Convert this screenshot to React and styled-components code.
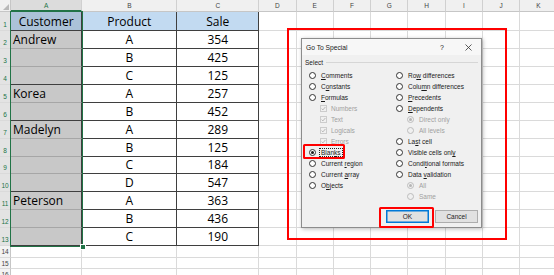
import React from 'react';
import styled, { createGlobalStyle } from 'styled-components';

const Global = createGlobalStyle`
  html, body { margin: 0; padding: 0; background: #fff; overflow: hidden; }
  body { width: 554px; height: 275px; }
`;

const GREEN = '#217346';
const GRID = '#dadada';
const DARK = '#3f3f3f';
const SOFT = '#a6a6a6';

const Page = styled.div`
  position: relative;
  width: 554px;
  height: 275px;
  overflow: hidden;
  background: #fff;
`;

const Sheet = styled.div`
  display: grid;
  grid-template-columns: 11px 71.3px 95px 82px repeat(8, 37.3px) 1fr;
  grid-template-rows: 12.3px 18.7px repeat(12, 17.94px) repeat(3, 11.6px);
  font-family: "Open Sans", sans-serif;
`;

const Placed = styled.div`
  grid-row: ${p => p.$row};
  grid-column: ${p => p.$col};
  box-sizing: border-box;
`;

const Corner = styled(Placed)`
  background: #f0f0f0;
  border-right: 1px solid #c6c6c6;
  border-bottom: 1px solid #c6c6c6;
  display: flex;
  align-items: flex-end;
  justify-content: flex-end;
  padding: 0 1px 1px 0;
`;

const ColHead = styled(Placed)`
  display: flex;
  align-items: center;
  justify-content: center;
  font-family: "Liberation Sans", Arial, sans-serif;
  font-size: 6.5px;
  color: ${p => (p.$sel ? GREEN : '#444')};
  background: ${p => (p.$sel ? '#dcdcdc' : '#f0f0f0')};
  border-right: 1px solid #d0d0d0;
  border-bottom: ${p => (p.$sel ? `2px solid ${GREEN}` : '1px solid #c6c6c6')};
`;

const RowHead = styled(Placed)`
  display: flex;
  align-items: ${p => (p.$short ? 'center' : 'flex-end')};
  justify-content: center;
  padding-bottom: ${p => (p.$short ? '0' : '2px')};
  font-family: "Liberation Sans", Arial, sans-serif;
  font-size: 6.5px;
  line-height: 7px;
  color: ${p => (p.$sel ? GREEN : '#444')};
  background: ${p => (p.$sel ? '#e3e3e3' : '#f3f3f3')};
  border-right: 1px solid #c6c6c6;
  border-bottom: 1px solid #dadada;
`;

const Cell = styled(Placed)`
  display: flex;
  align-items: flex-end;
  justify-content: ${p => p.$align || 'flex-start'};
  padding: 0 2px;
  background: ${p => p.$bg || '#fff'};
  border-right: 1px solid ${p => p.$r || GRID};
  border-bottom: 1px solid ${p => p.$b || GRID};
  font-size: 12px;
  line-height: 16px;
  color: #000;
  white-space: nowrap;
  overflow: hidden;
`;

const Selection = styled(Placed)`
  margin: -1px -1px -1px -1px;
  border: 1.5px solid ${GREEN};
  position: relative;
  pointer-events: none;
  z-index: 2;
`;

const FillHandle = styled.div`
  position: absolute;
  right: -3.5px;
  bottom: -3.5px;
  width: 4px;
  height: 4px;
  background: ${GREEN};
  border: 1px solid #fff;
`;

const Dialog = styled.div`
  position: absolute;
  left: 301px;
  top: 38px;
  width: 181px;
  height: 190px;
  box-sizing: border-box;
  background: #f0f0f0;
  border: 1px solid #8c8c8c;
  box-shadow: 1px 1px 4px rgba(0, 0, 0, 0.28);
  font-family: "Liberation Sans", Arial, sans-serif;
  font-size: 6.5px;
  color: #1a1a1a;
  display: flex;
  flex-direction: column;
  z-index: 3;
`;

const TitleBar = styled.div`
  height: 16px;
  display: flex;
  align-items: center;
  padding-left: 4px;
  background: #f7f7f7;
`;

const Title = styled.span`
  flex: 1;
  font-size: 6.7px;
`;

const TitleButton = styled.span`
  width: 26px;
  height: 16px;
  display: flex;
  align-items: center;
  justify-content: center;
  font-size: 7px;
  color: #222;
`;

const Body = styled.div`
  flex: 1;
  display: flex;
  flex-direction: column;
  padding: 0 3px 0 3px;
`;

const GroupHead = styled.div`
  height: 15px;
  display: flex;
  align-items: center;
  gap: 3px;
`;

const GroupLine = styled.div`
  flex: 1;
  height: 1px;
  background: #d6d6d6;
`;

const Options = styled.div`
  display: grid;
  grid-template-columns: 87px 1fr;
  padding-left: 4px;
`;

const OptionCol = styled.div`
  display: flex;
  flex-direction: column;
`;

const OptionRow = styled.div`
  height: 11px;
  display: flex;
  align-items: center;
  gap: ${p => (p.$check ? '3px' : '4px')};
  padding-left: ${p => (p.$indent ? '11px' : '0')};
  color: ${p => (p.$dis ? '#a0a0a0' : '#1a1a1a')};
  white-space: nowrap;
`;

const Radio = styled.span`
  box-sizing: border-box;
  width: 7px;
  height: 7px;
  border-radius: 50%;
  border: 1px solid ${p => (p.$dis ? '#bdbdbd' : '#333')};
  background: ${p => (p.$dis ? '#f0f0f0' : '#fff')};
  display: flex;
  align-items: center;
  justify-content: center;
  flex: none;
  &::after {
    content: '';
    display: ${p => (p.$on ? 'block' : 'none')};
    width: 3px;
    height: 3px;
    border-radius: 50%;
    background: ${p => (p.$dis ? '#b5b5b5' : '#1a1a1a')};
  }
`;

const CheckBox = styled.span`
  box-sizing: border-box;
  width: 7px;
  height: 7px;
  border: 1px solid #cccccc;
  background: #f0f0f0;
  display: flex;
  align-items: center;
  justify-content: center;
  flex: none;
`;

const Label = styled.span`
  padding: 0 1px;
  margin-left: -1px;
  border: 1px dotted ${p => (p.$focus ? '#222' : 'transparent')};
  line-height: 7px;
`;

const Key = styled.span`
  text-decoration: underline;
  text-underline-offset: 1px;
  text-decoration-thickness: 0.5px;
`;

const Buttons = styled.div`
  margin-top: 8px;
  display: flex;
  justify-content: flex-end;
  gap: 6px;
`;

const Button = styled.div`
  box-sizing: border-box;
  width: 43px;
  height: 13px;
  display: flex;
  align-items: center;
  justify-content: center;
  background: #e1e1e1;
  border: 1px solid ${p => (p.$default ? '#0078d7' : '#adadad')};
  box-shadow: ${p => (p.$default ? 'inset 0 0 0 0.5px #0078d7' : 'none')};
  color: #1a1a1a;
`;

const RedBox = styled.div`
  position: absolute;
  box-sizing: border-box;
  border: 2px solid #ff0000;
  border-radius: ${p => p.$radius || 0}px;
  pointer-events: none;
  z-index: 4;
`;

const COLS = ['A', 'B', 'C', 'D', 'E', 'F', 'G', 'H', 'I', 'J', 'K', ''];

const DATA = [
  ['Customer', 'Product', 'Sale'],
  ['Andrew', 'A', '354'],
  ['', 'B', '425'],
  ['', 'C', '125'],
  ['Korea', 'A', '257'],
  ['', 'B', '452'],
  ['Madelyn', 'A', '289'],
  ['', 'B', '125'],
  ['', 'C', '184'],
  ['', 'D', '547'],
  ['Peterson', 'A', '363'],
  ['', 'B', '436'],
  ['', 'C', '190'],
];
const GROUP_END = new Set([1, 4, 6, 10, 13]);

const LEFT = [
  { l: '&Comments' },
  { l: 'C&onstants' },
  { l: '&Formulas' },
  { l: 'Numbers', check: true, dis: true, indent: true },
  { l: 'Text', check: true, dis: true, indent: true },
  { l: 'Logicals', check: true, dis: true, indent: true },
  { l: 'Errors', check: true, dis: true, indent: true },
  { l: 'Blan&ks', on: true, focus: true },
  { l: 'Current &region' },
  { l: 'Current &array' },
  { l: 'O&bjects' },
];

const RIGHT = [
  { l: 'Ro&w differences' },
  { l: 'Colu&mn differences' },
  { l: '&Precedents' },
  { l: '&Dependents' },
  { l: 'Direct only', dis: true, indent: true, on: true },
  { l: 'All levels', dis: true, indent: true },
  { l: 'La&st cell' },
  { l: 'Visible cells onl&y' },
  { l: 'Condi&tional formats' },
  { l: 'Data &validation' },
  { l: 'All', dis: true, indent: true, on: true },
  { l: 'Same', dis: true, indent: true },
];

function LabelText({ text, dis }) {
  const i = text.indexOf('&');
  if (i < 0 || dis) return text.replace('&', '');
  return (
    <>
      {text.slice(0, i)}
      <Key>{text[i + 1]}</Key>
      {text.slice(i + 2)}
    </>
  );
}

function Option({ o }) {
  return (
    <OptionRow $dis={o.dis} $indent={o.indent} $check={o.check}>
      {o.check ? (
        <CheckBox>
          <svg width="5" height="5" viewBox="0 0 5 5">
            <path d="M0.6 2.6 L1.9 3.9 L4.4 1" fill="none" stroke="#a8a8a8" strokeWidth="0.8" />
          </svg>
        </CheckBox>
      ) : (
        <Radio $dis={o.dis} $on={o.on} />
      )}
      <Label $focus={o.focus}>
        <LabelText text={o.l} dis={o.dis} />
      </Label>
    </OptionRow>
  );
}

function SheetGrid() {
  const cells = [];
  cells.push(
    <Corner key="corner" $row={1} $col={1}>
      <svg width="6" height="6" viewBox="0 0 6 6">
        <path d="M6 0 L6 6 L0 6 Z" fill="#b8b8b8" />
      </svg>
    </Corner>
  );
  COLS.forEach((c, i) =>
    cells.push(
      <ColHead key={'h' + i} $row={1} $col={i + 2} $sel={c === 'A'}>
        {c}
      </ColHead>
    )
  );

  for (let r = 1; r <= 16; r++) {
    const inTable = r <= 13;
    cells.push(
      <RowHead key={'r' + r} $row={r + 1} $col={1} $sel={inTable} $short={r > 13}>
        {r}
      </RowHead>
    );
    COLS.forEach((c, ci) => {
      const key = `c${r}-${ci}`;
      const pos = { $row: r + 1, $col: ci + 2 };
      if (inTable && ci < 3) {
        const val = DATA[r - 1][ci];
        let bg = '#fff';
        let bottom = DARK;
        let align = 'center';
        if (ci === 0) {
          bg = r === 1 ? '#abc2d8' : '#c8c8c8';
          bottom = GROUP_END.has(r) ? DARK : SOFT;
          align = r === 1 ? 'center' : 'flex-start';
        } else if (r === 1) {
          bg = '#c2daf1';
        }
        cells.push(
          <Cell key={key} {...pos} $bg={bg} $r={DARK} $b={bottom} $align={align}>
            {val}
          </Cell>
        );
      } else {
        cells.push(<Cell key={key} {...pos} />);
      }
    });
  }
  return (
    <Sheet>
      {cells}
      <Selection $row="2 / 15" $col="2 / 3">
        <FillHandle />
      </Selection>
    </Sheet>
  );
}

export default function App() {
  return (
    <Page>
      <Global />
      <SheetGrid />
      <Dialog>
        <TitleBar>
          <Title>Go To Special</Title>
          <TitleButton>?</TitleButton>
          <TitleButton>
            <svg width="7" height="7" viewBox="0 0 7 7">
              <path d="M0.5 0.5 L6.5 6.5 M6.5 0.5 L0.5 6.5" stroke="#333" strokeWidth="0.8" />
            </svg>
          </TitleButton>
        </TitleBar>
        <Body>
          <GroupHead>
            <span>Select</span>
            <GroupLine />
          </GroupHead>
          <Options>
            <OptionCol>
              {LEFT.map((o, i) => (
                <Option key={i} o={o} />
              ))}
            </OptionCol>
            <OptionCol>
              {RIGHT.map((o, i) => (
                <Option key={i} o={o} />
              ))}
            </OptionCol>
          </Options>
          <Buttons>
            <Button $default>OK</Button>
            <Button>Cancel</Button>
          </Buttons>
        </Body>
      </Dialog>
      <RedBox style={{ left: 287, top: 28, width: 220, height: 212 }} />
      <RedBox $radius={1.5} style={{ left: 303, top: 144, width: 42, height: 15 }} />
      <RedBox $radius={1.5} style={{ left: 379, top: 207, width: 55, height: 21 }} />
    </Page>
  );
}
